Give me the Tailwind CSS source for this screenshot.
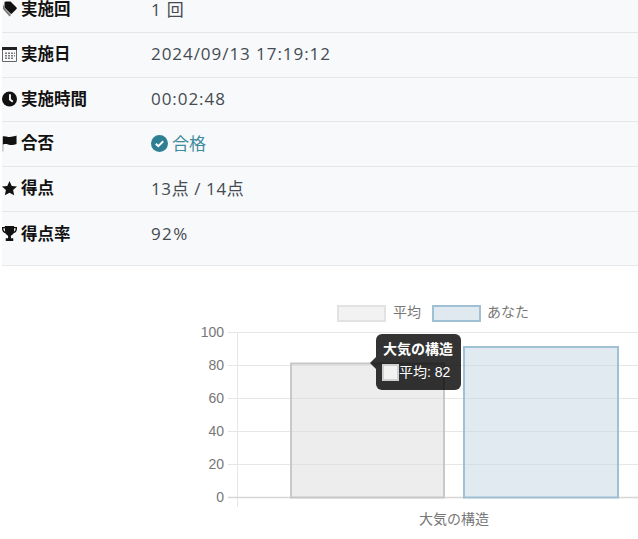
<!DOCTYPE html>
<html lang="ja">
<head>
    <meta charset="UTF-8">
    <title>受験結果</title>
    <script src="https://cdn.jsdelivr.net/npm/@tailwindcss/browser@4"></script>
</head>
<body class="bg-white overflow-hidden h-[539px] font-['Open_Sans','Noto_Sans_CJK_JP',sans-serif]">
    <!-- result table -->
    <div class="ml-[2px] -mt-[12px] bg-[#f8f9fa] text-[17px] text-[#444b52]">
        <div class="flex items-center h-[44.8px] pb-[1px] border-b border-[#e5e8ea]">
            <div class="w-[149px] flex items-center gap-[3px] font-bold text-[16.5px] text-[#111]">
                <svg class="w-[16px] h-[16px]" viewBox="0 0 16 16"><path d="M1 3v5l6.500 7.500 1.500-1.500L2.500 7z" fill="#777"/><path d="M2.500 1.500V6.500L8.500 12.500c.5.5 1 .5 1.500 0L14.500 8c.5-.5.5-1 0-1.500L8.500.5H3.500z" fill="#111"/></svg>
                <span>実施回</span>
            </div>
            <div class="tracking-[.8px]">1 回</div>
        </div>
        <div class="flex items-center h-[44.8px] pb-[1px] border-b border-[#e5e8ea]">
            <div class="w-[149px] flex items-center gap-[4px] font-bold text-[16.5px] text-[#111]">
                <svg class="w-[15px] h-[16px]" viewBox="0 0 15 16"><path d="M0 1h15v3H0z" fill="#222"/><path d="M.5 4v11.500h14V4" fill="none" stroke="#666"/><path d="M3 6.500h2v1.500H3zm3 0h2v1.500H6zm3 0h2v1.500H9zm3 0h1v1.500h-1zM3 9h2v1.500H3zm3 0h2v1.500H6zm3 0h2v1.500H9zm3 0h1v1.500h-1zM3 11.500h2V13H3zm3 0h2V13H6zm3 0h2V13H9z" fill="#777"/></svg>
                <span>実施日</span>
            </div>
            <div class="tracking-[.95px]">2024/09/13 17:19:12</div>
        </div>
        <div class="flex items-center h-[44.8px] pb-[1px] border-b border-[#e5e8ea]">
            <div class="w-[149px] flex items-center gap-[4px] font-bold text-[16.5px] text-[#111]">
                <svg class="w-[15px] h-[16px]" viewBox="0 0 16 16"><circle cx="8" cy="8" r="8" fill="#111"/><path d="M8.500 3v5.500l3 2.500" fill="none" stroke="#f8f9fa" stroke-width="2"/></svg>
                <span>実施時間</span>
            </div>
            <div class="tracking-[.95px]">00:02:48</div>
        </div>
        <div class="flex items-center h-[44.8px] pb-[1px] border-b border-[#e5e8ea]">
            <div class="w-[149px] flex items-center gap-[4px] font-bold text-[16.5px] text-[#111]">
                <svg class="w-[15px] h-[17px]" viewBox="0 0 16 17"><path d="M.5 1h1v16h-1z" fill="#aaa"/><path d="M1 1c3-1.200 5 1 9 .4 1.500-.2 4-.7 5.500-1.400v9c-3 1.600-6 1.400-9 .6-2-.7-3.500-.6-5.500 0z" fill="#111"/></svg>
                <span>合否</span>
            </div>
            <div class="flex items-center gap-[4px] text-[#3d8a9e]">
                <svg class="w-[17px] h-[17px]" viewBox="0 0 16 16"><circle cx="8" cy="8" r="8" fill="#2f7f93"/><path d="M4.500 8.200l2.400 2.400 4.600-4.700" fill="none" stroke="#fff" stroke-width="1.800"/></svg>
                <span>合格</span>
            </div>
        </div>
        <div class="flex items-center h-[44.8px] pb-[1px] border-b border-[#e5e8ea]">
            <div class="w-[149px] flex items-center gap-[4px] font-bold text-[16.5px] text-[#111]">
                <svg class="w-[15px] h-[15px]" viewBox="0 0 16 16" fill="#111"><path d="M8 0l2.400 5.200 5.600.6-4.200 3.800 1.200 5.600L8 12.400l-5 2.800 1.200-5.600L0 5.800l5.600-.6z"/></svg>
                <span>得点</span>
            </div>
            <div class="tracking-[.6px]">13点 / 14点</div>
        </div>
        <div class="flex pt-[11.500px] h-[54.500px] border-b border-[#e5e8ea]">
            <div class="w-[149px] h-[21px] flex items-center gap-[4px] font-bold text-[16.5px] text-[#111]">
                <svg class="w-[15px] h-[17px]" viewBox="0 0 16 16" fill="#111"><path d="M3 0h10v1h3v2c0 3-2 4.500-3.600 4.800C11.600 9.300 10 10 9.500 10.500V13H12v3H4v-3h2.500v-2.500C6 10 4.400 9.300 3.600 7.800 2 7.500 0 6 0 3V1h3zM1.500 2.500V3c0 1.500.8 2.500 1.800 3L3 2.500zm13 0H13L12.700 6c1-.5 1.800-1.500 1.800-3z"/></svg>
                <span>得点率</span>
            </div>
            <div class="leading-[21px] tracking-[1.400px]">92%</div>
        </div>
    </div>

    <!-- chart -->
    <div class="relative h-[273px]">
        <svg class="block w-[638px] h-[273px]" viewBox="0 266 638 273" font-family="'Liberation Sans','Noto Sans CJK JP',sans-serif" font-size="14" fill="#777">
            <g stroke="#e6e6e6" stroke-width="1">
                <path d="M228 332.500H638M228 365.500H638M228 398.500H638M228 431.500H638M228 464.500H638"/>
                <path d="M237.500 332V507"/>
                <path d="M228 497.500H638" stroke="#d6d6d6" stroke-width="1.500"/>
            </g>
            <rect x="291" y="363.500" width="153" height="134" fill="#dcdcdc" fill-opacity=".5" stroke="#c8c8c8" stroke-width="2"/>
            <rect x="464" y="347" width="154" height="150.500" fill="#c3d3e3" fill-opacity=".5" stroke="#a0c0d4" stroke-width="2"/>
            <g text-anchor="end">
                <text x="224" y="337">100</text>
                <text x="224" y="370">80</text>
                <text x="224" y="403">60</text>
                <text x="224" y="436">40</text>
                <text x="224" y="469">20</text>
                <text x="224" y="502">0</text>
            </g>
            <text x="454" y="524" text-anchor="middle">大気の構造</text>
            <rect x="338" y="306" width="47" height="15" fill="#f2f2f2" stroke="#e2e2e2" stroke-width="2"/>
            <text x="393" y="317">平均</text>
            <rect x="433" y="306" width="47" height="15" fill="#e1e9f0" stroke="#a0c0d4" stroke-width="2"/>
            <text x="487" y="317">あなた</text>
        </svg>
        <!-- tooltip over the first bar -->
        <div class="absolute left-[376px] top-[68px] w-[85px] h-[56px] rounded-[6px] bg-black/80 text-white font-['Liberation_Sans','Noto_Sans_CJK_JP',sans-serif] text-[14px]">
            <div class="absolute -left-[6px] top-[23px] border-y-[6px] border-r-[6px] border-y-transparent border-r-black/80"></div>
            <div class="pl-[7px] pt-[5px] leading-[20px] font-bold">大気の構造</div>
            <div class="flex items-center pl-[6px] mt-[3px] leading-[20px]">
                <span class="block w-[17px] h-[17px] bg-[#f2f2f2] border-2 border-[#d0d0d0]"></span>
                <span>平均: 82</span>
            </div>
        </div>
    </div>
</body>
</html>
